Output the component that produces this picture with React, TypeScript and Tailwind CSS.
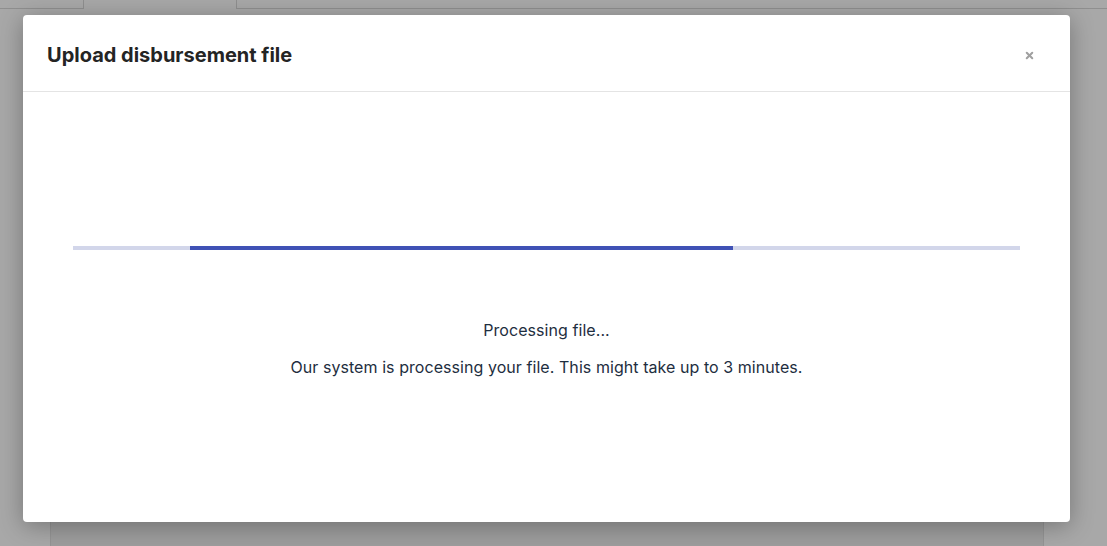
import { X } from 'lucide-react';

// ============================================
// FONDO (página detrás del modal)
// ============================================

function PaginaFondo() {
  return (
    <div className="h-[546px] w-full bg-[#a8a8a8] overflow-hidden">
      {/* Pestañas (recortadas arriba) */}
      <div className="flex h-[9px]">
        <div className="w-[84px] border-r border-b border-[#8f8f8f]" />
        <div className="w-[152px]" />
        <div className="flex-1 border-l border-b border-[#8f8f8f]" />
      </div>
      <div className="px-[50px] h-full">
        <div className="mx-0 mt-[20px] h-full w-[994px] border-x border-[#949494] bg-[#9d9d9d]" />
      </div>
    </div>
  );
}

// ============================================
// MODAL
// ============================================

export default function App() {
  const progreso = { inicio: 117, ancho: 543 };

  return (
    <div className="relative h-[546px] w-[1107px] overflow-hidden font-['Inter','Noto_Sans',sans-serif]">
      <PaginaFondo />

      <div className="absolute left-[23px] top-[15px] flex h-[507px] w-[1047px] flex-col rounded-[4px] bg-white shadow-[0_4px_24px_rgba(0,0,0,0.3)]">
        {/* Cabecera */}
        <div className="flex h-[77px] items-center justify-between border-b border-[#e4e4e4] pl-[24px] pr-[35px] pt-[4px]">
          <h2 className="text-[20px] font-bold text-[#242424]">
            Upload disbursement file
          </h2>
          <button className="text-[#a0a0a0]">
            <X className="h-[11px] w-[11px]" strokeWidth={4.5} />
          </button>
        </div>

        {/* Cuerpo */}
        <div className="flex flex-1 flex-col px-[50px] pt-[154px]">
          <div className="relative h-[4px] w-full bg-[#d2d6ea]">
            <div
              className="absolute top-0 h-[4px] bg-[#3f51b5]"
              style={{ left: progreso.inicio, width: progreso.ancho }}
            />
          </div>

          <div className="mt-[68px] flex flex-col items-center gap-[13px] text-[16px] tracking-[0.06px] text-[#1e2e40]">
            <p>Processing file...</p>
            <p>Our system is processing your file. This might take up to 3 minutes.</p>
          </div>
        </div>
      </div>
    </div>
  );
}
